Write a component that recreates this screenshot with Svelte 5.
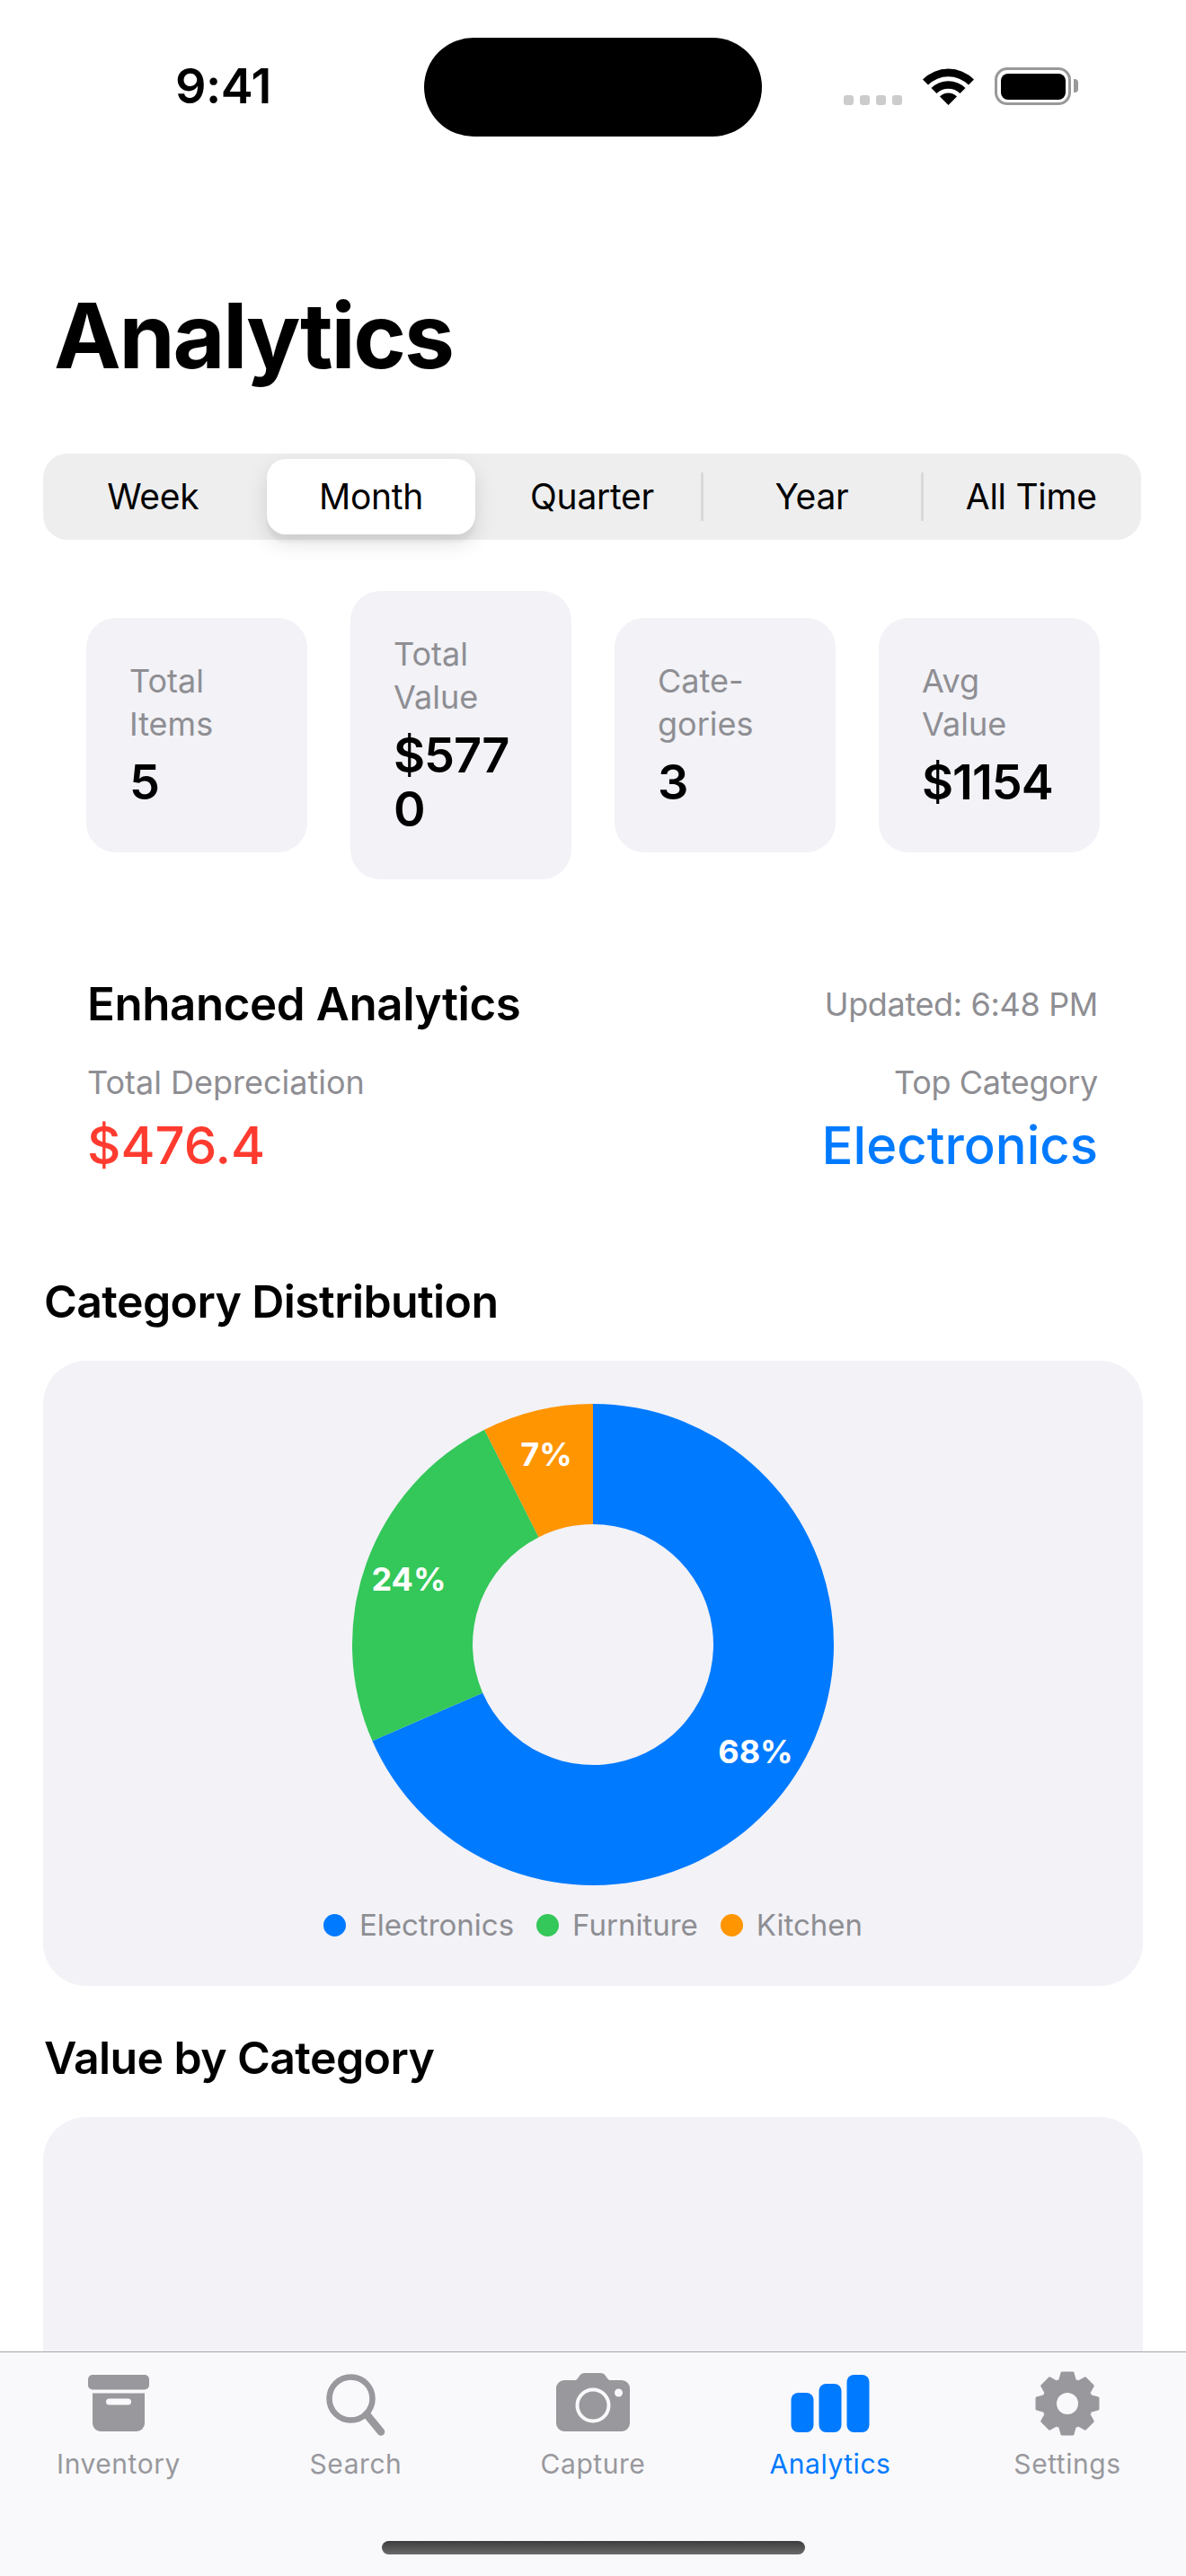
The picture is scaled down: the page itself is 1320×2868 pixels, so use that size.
<script lang="ts">
  const periods = ['Week', 'Month', 'Quarter', 'Year', 'All Time'];
  const selected = 'Month';

  const stats = [
    { label: 'Total Items', value: '5' },
    { label: 'Total Value', value: '$5770' },
    { label: 'Cate-gories', value: '3' },
    { label: 'Avg Value', value: '$1154' },
  ];

  const legend = [
    { name: 'Electronics', color: '#007aff' },
    { name: 'Furniture', color: '#34c759' },
    { name: 'Kitchen', color: '#ff9500' },
  ];

  // donut: angles measured clockwise from 12 o'clock
  const cx = 268;
  const cy = 268;
  const rOut = 268;
  const rIn = 134;

  function pt(r: number, deg: number) {
    const a = ((deg - 90) * Math.PI) / 180;
    return `${(cx + r * Math.cos(a)).toFixed(2)} ${(cy + r * Math.sin(a)).toFixed(2)}`;
  }
  function slice(from: number, to: number) {
    const big = to - from > 180 ? 1 : 0;
    return `M${pt(rOut, from)}A${rOut} ${rOut} 0 ${big} 1 ${pt(rOut, to)}L${pt(rIn, to)}A${rIn} ${rIn} 0 ${big} 0 ${pt(rIn, from)}Z`;
  }
  const slices = [
    { d: slice(0, 246.4), color: '#007aff', label: '68%', x: 181, y: 119 },
    { d: slice(246.4, 333.2), color: '#34c759', label: '24%', x: -205, y: -73 },
    { d: slice(333.2, 360), color: '#ff9500', label: '7%', x: -52, y: -212 },
  ];

  // gear outline, 8 teeth
  function gearPath() {
    const out = [];
    const c = 36;
    for (let i = 0; i < 8; i++) {
      const a = (i * 45 - 90) * (Math.PI / 180);
      const d1 = (18 * Math.PI) / 180;
      const d2 = (10 * Math.PI) / 180;
      const p = [[27, a - d1], [34.5, a - d2], [34.5, a + d2], [27, a + d1]];
      for (const [r, t] of p) {
        out.push(`${(c + r * Math.cos(t)).toFixed(2)} ${(c + r * Math.sin(t)).toFixed(2)}`);
      }
    }
    return 'M' + out.join('L') + 'Z';
  }
</script>

<div class="phone">
  <div class="status">
    <span class="time">9:41</span>
    <div class="island"></div>
    <div class="status-right">
      <div class="dots"><i></i><i></i><i></i><i></i></div>
      <svg class="wifi" width="57" height="42" viewBox="0 0 57 42">
        <path d="M0 13.5A40 40 0 0 1 57 13.5L51 19.5A32 32 0 0 0 6 19.5Z" />
        <path d="M9.5 23A27 27 0 0 1 47.5 23L41.5 29A18.5 18.5 0 0 0 15.5 29Z" />
        <path d="M19 32.5A13.5 13.5 0 0 1 38 32.5L28.5 42Z" />
      </svg>
      <div class="battery"><div class="level"></div></div>
    </div>
  </div>

  <h1>Analytics</h1>

  <div class="segments">
    {#each periods as p, i}
      <div class="seg" class:active={p === selected} class:sep={i >= 3}>{p}</div>
    {/each}
  </div>

  <div class="stats">
    {#each stats as s}
      <div class="stat">
        <div class="stat-label">{s.label}</div>
        <div class="stat-value">{s.value}</div>
      </div>
    {/each}
  </div>

  <section class="enhanced">
    <div class="row head">
      <h2>Enhanced Analytics</h2>
      <span class="muted tight">Updated: 6:48 PM</span>
    </div>
    <div class="row">
      <div>
        <div class="muted">Total Depreciation</div>
        <div class="figure red">$476.4</div>
      </div>
      <div class="right">
        <div class="muted tight">Top Category</div>
        <div class="figure blue">Electronics</div>
      </div>
    </div>
  </section>

  <h3>Category Distribution</h3>
  <div class="chart-card">
    <svg class="donut" width="536" height="536" viewBox="0 0 536 536">
      {#each slices as s}
        <path d={s.d} fill={s.color} />
      {/each}
      {#each slices as s}
        <text x={cx + s.x} y={cy + s.y} class="pct">{s.label}</text>
      {/each}
    </svg>
    <div class="legend">
      {#each legend as l}
        <div class="legend-item">
          <span class="dot" style="background:{l.color}"></span>{l.name}
        </div>
      {/each}
    </div>
  </div>

  <h3 class="second">Value by Category</h3>
  <div class="chart-card empty"></div>

  <nav class="tabs">
    <div class="tab">
      <svg width="68" height="72" viewBox="0 0 68 72">
        <g transform="translate(0 4)">
          <rect width="68" height="16.5" rx="5" />
          <path d="M5 20.5H63V54a9 9 0 0 1-9 9H14a9 9 0 0 1-9-9Z" />
          <rect x="20" y="26.5" width="28" height="7" rx="3.5" class="cut" />
        </g>
      </svg>
      <span>Inventory</span>
    </div>
    <div class="tab">
      <svg width="68" height="72" viewBox="0 0 68 72">
        <g transform="translate(1 3)" fill="none" stroke="#98989d">
          <circle cx="27.5" cy="27.5" r="24" stroke-width="6.5" />
          <path d="M45 45L61 64.5" stroke-width="8.5" stroke-linecap="round" />
        </g>
      </svg>
      <span>Search</span>
    </div>
    <div class="tab">
      <svg width="84" height="72" viewBox="0 0 84 72">
        <path d="M10 10H21.5C23 10 24 9.4 25 8L27.5 4.5C29 2.7 30.5 2 33 2H50C52.6 2 54 2.7 55.5 4.5L58 8C59 9.4 60 10 61.500 10H74a9 9 0 0 1 9 9V58a9 9 0 0 1-9 9H10a9 9 0 0 1-9-9V19a9 9 0 0 1 9-9Z" />
        <circle cx="42" cy="38" r="17.500" fill="none" stroke-width="4" class="ring" />
        <circle cx="70.500" cy="24" r="4.500" class="cut" />
      </svg>
      <span>Capture</span>
    </div>
    <div class="tab current">
      <svg width="88" height="72" viewBox="0 0 88 72">
        <rect x="0.500" y="24" width="25" height="44" rx="8" />
        <rect x="31.500" y="14" width="25" height="54" rx="8" />
        <rect x="62.500" y="4" width="25" height="64" rx="8" />
      </svg>
      <span>Analytics</span>
    </div>
    <div class="tab">
      <svg width="72" height="72" viewBox="0 0 72 72">
        <path d={gearPath()} stroke="#98989d" stroke-width="3" stroke-linejoin="round" />
        <circle cx="36" cy="36" r="12" class="cut" />
      </svg>
      <span>Settings</span>
    </div>
    <div class="home"></div>
  </nav>
</div>

<style>
  :global(body) {
    margin: 0;
    background: #fff;
  }
  .phone {
    position: relative;
    width: 1320px;
    height: 2868px;
    overflow: hidden;
    background: #fff;
    font-family: Inter, 'Liberation Sans', sans-serif;
    color: #000;
  }

  .status {
    height: 192px;
    display: flex;
    justify-content: space-between;
    box-sizing: border-box;
    padding: 64px 128px 0 195px;
  }
  .time {
    font-size: 54px;
    font-weight: 600;
    line-height: 64px;
    letter-spacing: -0.5px;
  }
  .island {
    position: absolute;
    left: 472px;
    top: 42px;
    width: 376px;
    height: 110px;
    border-radius: 55px;
    background: #000;
  }
  .status-right {
    display: flex;
    align-items: flex-end;
    height: 53px;
  }
  .dots {
    display: flex;
    gap: 7px;
    margin-right: 23px;
  }
  .dots i {
    width: 11px;
    height: 11px;
    border-radius: 3px;
    background: #ccc;
  }
  .wifi {
    margin-right: 23px;
  }
  .battery {
    position: relative;
    width: 85px;
    height: 42px;
    box-sizing: border-box;
    border: 3.5px solid #999;
    border-radius: 14px;
    padding: 3.5px;
  }
  .battery::after {
    content: '';
    position: absolute;
    right: -11px;
    top: 10px;
    width: 5px;
    height: 15px;
    border-radius: 0 4px 4px 0;
    background: #999;
  }
  .level {
    height: 100%;
    border-radius: 8px;
    background: #000;
  }

  h1 {
    margin: 0 0 0 60px;
    font-size: 100px;
    line-height: 120px;
    font-weight: 700;
    letter-spacing: -2.2px;
    height: 120px;
    padding-top: 122px;
  }

  .segments {
    margin: 71px 50px 0 48px;
    height: 96px;
    display: grid;
    grid-template-columns: repeat(5, 1fr);
    align-items: center;
    border-radius: 27px;
    background: #eeeeef;
  }
  .seg {
    position: relative;
    text-align: center;
    font-size: 39px;
    line-height: 84px;
    letter-spacing: -0.3px;
  }
  .seg.active {
    margin: 0 8px 0 5px;
    background: #fff;
    border-radius: 21px;
    box-shadow: 0 9px 24px rgba(0, 0, 0, 0.12), 0 9px 3px rgba(0, 0, 0, 0.04);
  }
  .seg.sep::before {
    content: '';
    position: absolute;
    left: -1px;
    top: 15px;
    bottom: 15px;
    width: 3px;
    background: #d9d9da;
  }

  .stats {
    display: flex;
    align-items: center;
    gap: 48px;
    margin: 57px 96px 0;
  }
  .stat {
    flex: 1;
    min-width: 0;
    padding: 46px 48px 48px;
    box-sizing: border-box;
    border-radius: 33px;
    background: #f2f2f7;
  }
  .stat-label {
    font-size: 36px;
    line-height: 48px;
    color: #8e8e93;
    width: 120px;
  }
  .stat-value {
    margin-top: 11px;
    font-size: 54px;
    line-height: 60px;
    font-weight: 600;
    letter-spacing: -1px;
    word-break: break-all;
  }

  .enhanced {
    margin: 110px 98px 0 97px;
  }
  .row {
    display: flex;
    justify-content: space-between;
  }
  .head {
    align-items: center;
    margin-bottom: 36px;
  }
  h2 {
    margin: 0;
    font-size: 51px;
    line-height: 58px;
    font-weight: 600;
    letter-spacing: -0.4px;
  }
  .muted {
    font-size: 36px;
    line-height: 44px;
    color: #8e8e93;
  }
  .tight {
    letter-spacing: -0.35px;
  }
  .figure {
    margin-top: 12px;
    font-size: 58px;
    line-height: 72px;
    font-weight: 500;
  }
  .red {
    color: #ff3b30;
  }
  .blue {
    color: #007aff;
  }
  .right {
    text-align: right;
  }

  h3 {
    margin: 107px 0 0 49px;
    font-size: 50px;
    line-height: 62px;
    font-weight: 600;
    letter-spacing: -0.6px;
  }
  h3.second {
    margin-top: 49px;
  }
  .chart-card {
    margin: 35px 48px 0;
    padding: 48px 0 0;
    height: 696px;
    box-sizing: border-box;
    border-radius: 48px;
    background: #f2f2f7;
    display: flex;
    flex-direction: column;
    align-items: center;
  }
  .chart-card.empty {
    height: 600px;
  }
  .donut {
    display: block;
  }
  .pct {
    font-size: 36px;
    font-weight: 700;
    fill: #fff;
    text-anchor: middle;
    dominant-baseline: central;
  }
  .legend {
    display: flex;
    gap: 25px;
    margin-top: 24px;
  }
  .legend-item {
    display: flex;
    align-items: center;
    gap: 15px;
    font-size: 33px;
    line-height: 40px;
    color: #8e8e93;
  }
  .dot {
    width: 25px;
    height: 25px;
    border-radius: 50%;
  }

  .tabs {
    position: absolute;
    left: 0;
    right: 0;
    bottom: 0;
    height: 250px;
    box-sizing: border-box;
    padding-top: 21px;
    display: grid;
    grid-template-columns: repeat(5, 264px);
    justify-content: center;
    align-content: start;
    border-top: 1px solid #a6a6aa;
    background: #f9f9fb;
  }
  .tab {
    display: flex;
    flex-direction: column;
    align-items: center;
    color: #98989d;
    font-size: 30px;
    line-height: 36px;
    letter-spacing: 0.55px;
    fill: #98989d;
  }
  .tab svg {
    display: block;
    margin-bottom: 13px;
  }
  .tab .cut {
    fill: #f9f9fb;
  }
  .tab .ring {
    stroke: #f9f9fb;
  }
  .tab.current {
    color: #007aff;
    fill: #007aff;
  }
  .home {
    position: absolute;
    left: 425px;
    bottom: 24px;
    width: 471px;
    height: 15px;
    border-radius: 8px;
    background: linear-gradient(#3c3c3c, #6a6a6a);
  }
</style>
